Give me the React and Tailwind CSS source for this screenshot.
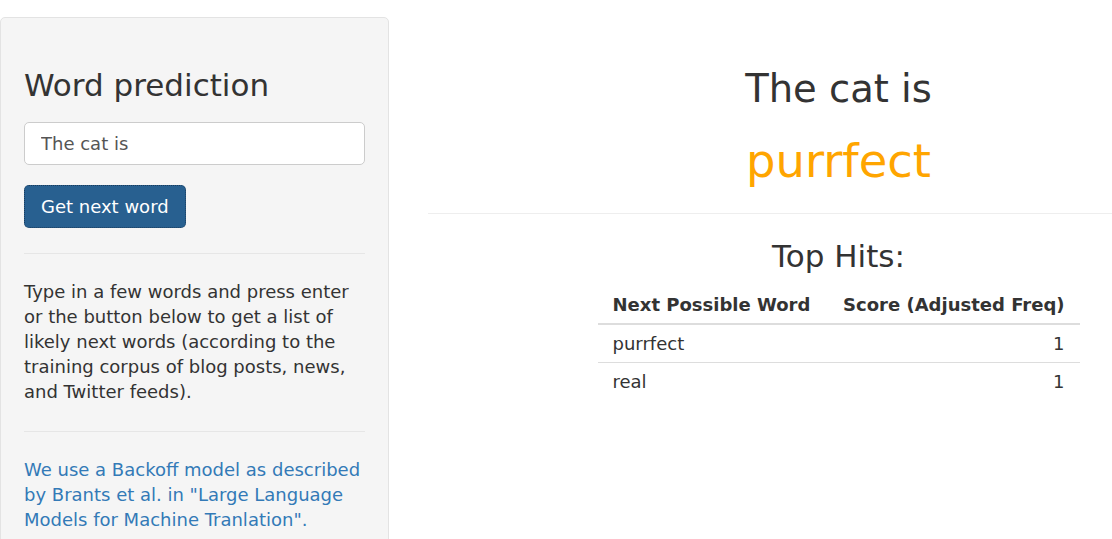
import React from 'react';

const hits = [
  { word: 'purrfect', score: 1 },
  { word: 'real', score: 1 },
];

const App = () => {
  return (
    <div
      className="flex w-[1112px] h-[539px] overflow-hidden bg-white text-[#333] text-[18px] leading-[25px]"
      style={{ fontFamily: '"DejaVu Sans", Verdana, sans-serif' }}
    >
      {/* sidebar */}
      <div className="w-[389px] shrink-0">
        <div className="mt-[17px] h-[560px] rounded-[5px] border border-[#e3e3e3] bg-[#f5f5f5] px-[23px] pt-[51px]">
          <h3 className="text-[31px] leading-[33px] font-normal">Word prediction</h3>
          <input
            type="text"
            defaultValue="The cat is"
            className="mt-[20px] block h-[43px] w-full rounded-[5px] border border-[#ccc] bg-white px-[16px] text-[18px] text-[#555] outline-none"
          />
          <button className="mt-[20px] block h-[43px] rounded-[5px] border border-dotted border-[#1b3c5c] bg-[#286090] px-[16px] pb-[1px] text-white">
            Get next word
          </button>
          <hr className="mt-[25px] border-0 border-t border-[#e6e6e6]" />
          <p className="mt-[25px]">
            Type in a few words and press enter or the button below to get a list of likely next words (according to the
            training corpus of blog posts, news, and Twitter feeds).
          </p>
          <hr className="mt-[27px] border-0 border-t border-[#e6e6e6]" />
          <p className="mt-[25px] text-[#337ab7]">
            We use a Backoff model as described by Brants et al. in "Large Language Models for Machine Tranlation".
          </p>
        </div>
      </div>

      {/* main panel */}
      <div className="ml-[39px] w-[821px] shrink-0 text-center">
        <h2 className="mt-[68px] text-[38.5px] leading-[41px] font-normal">The cat is</h2>
        <h1 className="mt-[27px] text-[46.5px] leading-[50px] font-normal text-[#ffa500]">purrfect</h1>
        <hr className="mt-[27px] border-0 border-t border-[#eee]" />
        <h3 className="mt-[26px] text-[31px] leading-[33px] font-normal">Top Hits:</h3>
        <table className="mx-auto mt-[13px] w-[482px] border-collapse whitespace-nowrap text-left">
          <thead>
            <tr className="border-b-2 border-[#ddd]">
              <th className="px-[15px] py-[6px] font-bold">Next Possible Word</th>
              <th className="px-[15px] py-[6px] text-right font-bold">Score (Adjusted Freq)</th>
            </tr>
          </thead>
          <tbody>
            {hits.map((h, i) => (
              <tr key={h.word} className={i > 0 ? 'border-t border-[#ddd]' : ''}>
                <td className="px-[15px] py-[6px]">{h.word}</td>
                <td className="px-[15px] py-[6px] text-right">{h.score}</td>
              </tr>
            ))}
          </tbody>
        </table>
      </div>
    </div>
  );
};

export default App;
